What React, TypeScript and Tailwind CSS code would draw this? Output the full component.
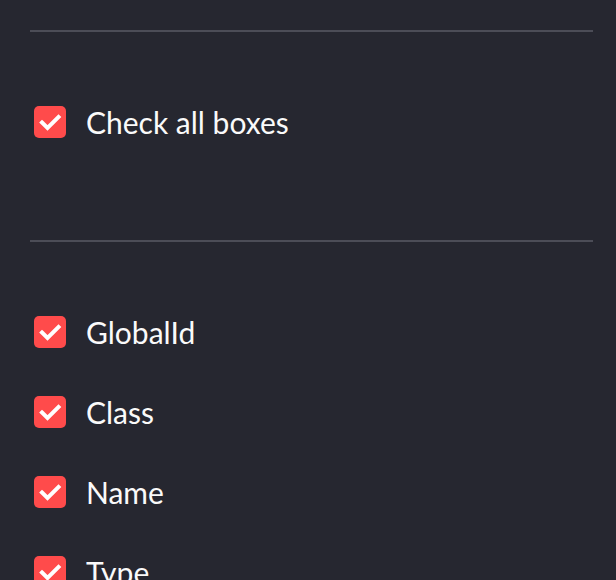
import React from "react";

const fields = ["GlobalId", "Class", "Name", "Type"];

const CheckBox: React.FC<{ label: string }> = ({ label }) => (
  <label className="flex items-center gap-5 h-8 pl-1">
    <span className="flex items-center justify-center w-8 h-8 rounded-[5px] bg-[#ff4b4b] shrink-0">
      <svg viewBox="0 0 32 32" className="w-8 h-8" fill="none">
        <path d="M8 16.5l5.5 5.5L24.5 11" stroke="#ffffff" strokeWidth="4" strokeLinecap="square" />
      </svg>
    </span>
    <span className="text-[30px] leading-none text-[#fafafa]">{label}</span>
  </label>
);

export default function App() {
  return (
    <div className="min-h-[580px] bg-[#262730] px-[30px] pt-[30px] overflow-hidden" style={{ fontFamily: "Lato, 'Noto Sans', sans-serif" }}>
      <div className="h-[2px] bg-[#4c4d57] mr-[-7px]" />
      <div className="mt-[74px]">
        <CheckBox label="Check all boxes" />
      </div>
      <div className="h-[2px] bg-[#4c4d57] mt-[102px] mr-[-7px]" />
      <div className="mt-[74px] flex flex-col gap-12">
        {fields.map((f) => (
          <CheckBox key={f} label={f} />
        ))}
      </div>
    </div>
  );
}
